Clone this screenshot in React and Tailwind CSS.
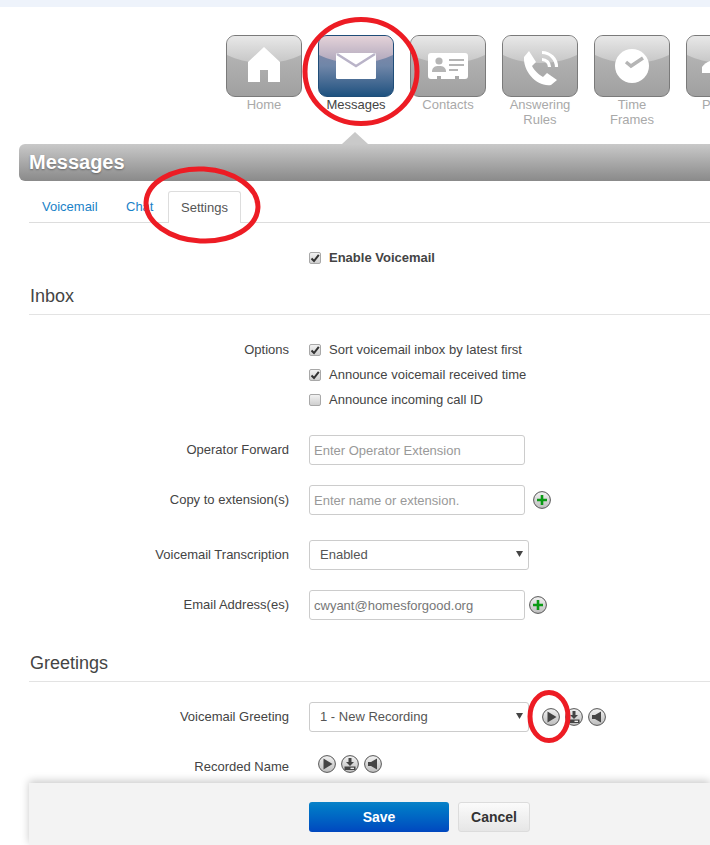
import React from "react";

const FONT = { fontFamily: '"Liberation Sans", Arial, sans-serif' };

function HomeGlyph() {
  return <path d="M38 12 L54 27 V47 H42 V35 H34 V47 H22 V27 Z" fill="#fff" />;
}
function MailGlyph() {
  return (
    <g>
      <rect x="18" y="18" width="40" height="26" rx="1.5" fill="#fff" />
      <path d="M19 19 L38 31 L57 19" fill="none" stroke="#b9b3c8" strokeWidth="2.5" />
    </g>
  );
}
function CardGlyph() {
  return (
    <g>
      <path d="M21 18 H55 a3 3 0 0 1 3 3 V41 a3 3 0 0 1 -3 3 H49 V41 H45 V44 H31 V41 H27 V44 H21 a3 3 0 0 1 -3 -3 V21 a3 3 0 0 1 3 -3 Z" fill="#fff" />
      <circle cx="29" cy="26" r="3.6" fill="#b5b5b5" />
      <path d="M22 37 C22 32 25 31 29 31 C33 31 36 32 36 37 Z" fill="#b5b5b5" />
      <path d="M39 25 H54 M39 30 H54 M39 35 H48" stroke="#b5b5b5" strokeWidth="2" fill="none" />
    </g>
  );
}
function PhoneGlyph() {
  return (
    <g>
      <path d="M22 22 L27 16 L34 27 L30 31 C32 35 37 40 41 42 L45 38 L55 45 L49 50 C35 52 21 37 22 22 Z" fill="#fff" />
      <path d="M40 17.5 A14.5 14.5 0 0 1 54.5 32 M40 24.5 A7.5 7.5 0 0 1 47.5 32" fill="none" stroke="#fff" strokeWidth="3.2" />
    </g>
  );
}
function ClockGlyph() {
  return (
    <g>
      <circle cx="38" cy="31" r="17" fill="#fff" />
      <path d="M32 27 L37 31 L49 23" fill="none" stroke="#b5b5b5" strokeWidth="3.5" />
    </g>
  );
}
function PhonesGlyph() {
  return <path d="M16 38 V32 C18 29 21 27 24 26 V38 Z" fill="#fff" />;
}

const TILES = [
  { label: ["Home"], glyph: <HomeGlyph /> },
  { label: ["Messages"], glyph: <MailGlyph />, active: true },
  { label: ["Contacts"], glyph: <CardGlyph /> },
  { label: ["Answering", "Rules"], glyph: <PhoneGlyph /> },
  { label: ["Time", "Frames"], glyph: <ClockGlyph /> },
  { label: ["Phones"], glyph: <PhonesGlyph /> },
];

function Tile({ label, glyph, active }) {
  return (
    <div className="flex w-[76px] shrink-0 flex-col items-center">
      <div
        className={
          active
            ? "relative h-[62px] w-[76px] overflow-hidden rounded-[9px] border border-[#1f4d78] bg-gradient-to-b from-[#8d8aa8] via-[#6f86a8] to-[#1d5280]"
            : "relative h-[62px] w-[76px] overflow-hidden rounded-[9px] border border-[#7a7a7a] bg-gradient-to-b from-[#bcbcbc] to-[#a0a0a0]"
        }
      >
        <div
          className={
            active
              ? "absolute left-[-20px] top-[-40px] h-[67px] w-[114px] rounded-[50%] bg-gradient-to-b from-[#e4d2d8] from-60% to-[#aea6bb]"
              : "absolute left-[-20px] top-[-40px] h-[67px] w-[114px] rounded-[50%] bg-gradient-to-b from-[#e8e8e8] from-60% to-[#c6c6c6]"
          }
        />
        <svg viewBox="0 0 76 62" className="absolute left-[-1px] top-[-1px] h-[62px] w-[76px]">
          {glyph}
        </svg>
      </div>
      <div className={active ? "text-center text-[13px] leading-[15px] text-[#444]" : "text-center text-[13px] leading-[15px] text-[#a9a9a9]"}>
        {label.map((l) => (
          <div key={l} className="whitespace-nowrap">
            {l}
          </div>
        ))}
      </div>
    </div>
  );
}

function Checkbox({ checked }) {
  return (
    <span className="flex h-[12px] w-[12px] shrink-0 items-center justify-center rounded-[2px] border border-[#a8a8a8] bg-gradient-to-b from-[#f2f2f2] to-[#cfcfcf]">
      {checked && (
        <svg viewBox="0 0 10 10" className="h-[10px] w-[10px]">
          <path d="M1.5 5.5 L4 8 L8.8 1.8" fill="none" stroke="#333" strokeWidth="2" />
        </svg>
      )}
    </span>
  );
}

function CheckRow({ checked, children, bold }) {
  return (
    <div className={bold ? "flex h-[25px] items-center gap-2 text-[13px] font-bold text-[#444]" : "flex h-[25px] items-center gap-2 text-[13px] text-[#444]"}>
      <Checkbox checked={checked} />
      <span className="whitespace-nowrap">{children}</span>
    </div>
  );
}

function Row({ label, children, className = "" }) {
  return (
    <div className={`flex ${className}`}>
      <div className="flex h-[30px] w-[260px] shrink-0 items-center justify-end whitespace-nowrap text-[13px] text-[#444]">{label}</div>
      <div className="ml-5 flex items-center">{children}</div>
    </div>
  );
}

function TextField({ placeholder, value }) {
  return (
    <input
      readOnly
      placeholder={placeholder}
      value={value}
      className="box-border h-[30px] w-[216px] rounded-[3px] border border-[#ccc] bg-white pl-[4px] text-[13px] text-[#777] outline-none placeholder:text-[#999]"
    />
  );
}

function Dropdown({ value }) {
  return (
    <div className="relative h-[30px] w-[220px]">
      <select
        value={value}
        onChange={() => {}}
        className="box-border h-[30px] w-[220px] appearance-none rounded-[3px] border border-[#ccc] bg-white pl-[10px] text-[13px] text-[#555] outline-none"
      >
        <option>{value}</option>
      </select>
      <svg viewBox="0 0 7 6" className="absolute right-[6px] top-[11px] h-[6px] w-[7px]">
        <path d="M0 0 H7 L3.5 6 Z" fill="#444" />
      </svg>
    </div>
  );
}

function RoundIcon({ children, className = "" }) {
  return (
    <svg viewBox="0 0 18 18" className={`h-[18px] w-[18px] shrink-0 ${className}`}>
      <defs>
        <linearGradient id="roundfill" x1="0" y1="0" x2="0" y2="1">
          <stop offset="0" stopColor="#f2f2f2" />
          <stop offset="1" stopColor="#bdbdbd" />
        </linearGradient>
      </defs>
      <circle cx="9" cy="9" r="8.4" fill="url(#roundfill)" stroke="#555" strokeWidth="1" />
      {children}
    </svg>
  );
}

const Plus = ({ className }) => (
  <RoundIcon className={className}>
    <path d="M9 4 V14 M4 9 H14" stroke="#0a9a14" strokeWidth="2.6" />
  </RoundIcon>
);
const Play = ({ className }) => (
  <RoundIcon className={className}>
    <path d="M5.5 3.5 L14.5 9 L5.5 14.5 Z" fill="#444" />
  </RoundIcon>
);
const Download = ({ className }) => (
  <RoundIcon className={className}>
    <path d="M7.5 3 H10.5 V7 H13 L9 11 L5 7 H7.5 Z" fill="#444" />
    <rect x="3.5" y="11.5" width="11" height="3.5" fill="#444" />
    <rect x="9.5" y="12.7" width="3.5" height="1.2" fill="#fff" />
  </RoundIcon>
);
const Speaker = ({ className }) => (
  <RoundIcon className={className}>
    <path d="M4 7 H7 L13 3.5 V14.5 L7 11 H4 Z" fill="#444" />
  </RoundIcon>
);

function Section({ title, className = "" }) {
  return (
    <div className={`ml-[29px] box-border h-[33px] border-b border-[#e3e3e3] pl-[1px] text-[18px] leading-[28px] text-[#444] ${className}`}>
      {title}
    </div>
  );
}

export default function App() {
  return (
    <div style={FONT} className="relative h-[845px] w-[710px] overflow-hidden bg-white">
      <div className="h-[7px] bg-[#eef3fb]" />

      <nav className="flex gap-4 pl-[226px] pt-[28px]">
        {TILES.map((t) => (
          <Tile key={t.label[0]} {...t} />
        ))}
      </nav>

      <div className="relative ml-[19px] mt-[17px] flex h-[37px] items-center rounded-l-[6px] bg-gradient-to-b from-[#c9c9c9] to-[#8a8a8a] pb-[2px] pl-[10px]">
        <div className="absolute left-[323px] top-[-12px] h-0 w-0 border-x-[13px] border-b-[12px] border-x-transparent border-b-[#c9c9c9]" />
        <h1 className="text-[20px] font-bold text-white [text-shadow:0_1px_2px_rgba(0,0,0,0.35)]">Messages</h1>
      </div>

      <div className="ml-[29px] mt-[10px] box-border flex h-[32px] items-end border-b border-[#ddd] text-[13px]">
        <span className="flex h-[31px] w-[97px] items-center pl-[13px] text-[#1a82c8]">Voicemail</span>
        <span className="flex h-[31px] w-[42px] items-center text-[#1a82c8]">Chat</span>
        <span className="relative top-[1px] flex h-[32px] w-[73px] items-center justify-center rounded-t-[3px] border border-b-0 border-[#ddd] bg-white text-[#555]">
          Settings
        </span>
      </div>

      <div className="ml-[309px] mt-[22px]">
        <CheckRow checked bold>
          Enable Voicemail
        </CheckRow>
      </div>

      <Section title="Inbox" className="mt-[12px]" />

      <div className="ml-[29px] mt-[22px] flex">
        <div className="flex h-[25px] w-[260px] shrink-0 items-center justify-end text-[13px] text-[#444]">Options</div>
        <div className="ml-5">
          <CheckRow checked>Sort voicemail inbox by latest first</CheckRow>
          <CheckRow checked>Announce voicemail received time</CheckRow>
          <CheckRow>Announce incoming call ID</CheckRow>
        </div>
      </div>

      <div className="ml-[29px]">
        <Row label="Operator Forward" className="mt-[23px]">
          <TextField placeholder="Enter Operator Extension" />
        </Row>
        <Row label="Copy to extension(s)" className="mt-[20px]">
          <TextField placeholder="Enter name or extension." />
          <Plus className="ml-2" />
        </Row>
        <Row label="Voicemail Transcription" className="mt-[25px]">
          <Dropdown value="Enabled" />
        </Row>
        <Row label="Email Address(es)" className="mt-[20px]">
          <TextField value="cwyant@homesforgood.org" />
          <Plus className="ml-1" />
        </Row>
      </div>

      <Section title="Greetings" className="mt-[29px]" />

      <div className="ml-[29px]">
        <Row label="Voicemail Greeting" className="mt-[20px]">
          <Dropdown value="1 - New Recording" />
          <Play className="ml-[13px]" />
          <Download className="ml-[5px]" />
          <Speaker className="ml-[5px]" />
        </Row>
        <div className="mt-[21px] flex h-[22px]">
          <div className="flex w-[260px] shrink-0 items-center justify-end pt-[5px] text-[13px] text-[#444]">Recorded Name</div>
          <div className="ml-[29px] flex items-center gap-[5px]">
            <Play />
            <Download />
            <Speaker />
          </div>
        </div>
      </div>

      <footer className="ml-[29px] mt-[8px] flex h-[62px] items-start bg-[#f3f3f3] pl-[280px] pt-[19px] shadow-[0_-2px_8px_rgba(0,0,0,0.22)]">
        <button className="h-[30px] w-[140px] rounded-[3px] bg-gradient-to-b from-[#0a82c8] to-[#0047bf] text-[14px] font-bold text-white">
          Save
        </button>
        <button className="ml-[9px] h-[30px] w-[72px] rounded-[3px] border border-[#dcdcdc] bg-gradient-to-b from-[#fbfbfb] to-[#e6e6e6] text-[14px] font-bold text-[#333]">
          Cancel
        </button>
      </footer>

      <svg className="pointer-events-none absolute left-0 top-0 h-[845px] w-[710px]" viewBox="0 0 710 845" fill="none" stroke="#ed1c24" strokeWidth="5">
        <ellipse cx="361" cy="71.5" rx="56" ry="52" />
        <ellipse cx="202" cy="205" rx="56" ry="36" transform="rotate(3 202 205)" />
        <ellipse cx="549" cy="716.5" rx="19" ry="24" />
      </svg>
    </div>
  );
}
